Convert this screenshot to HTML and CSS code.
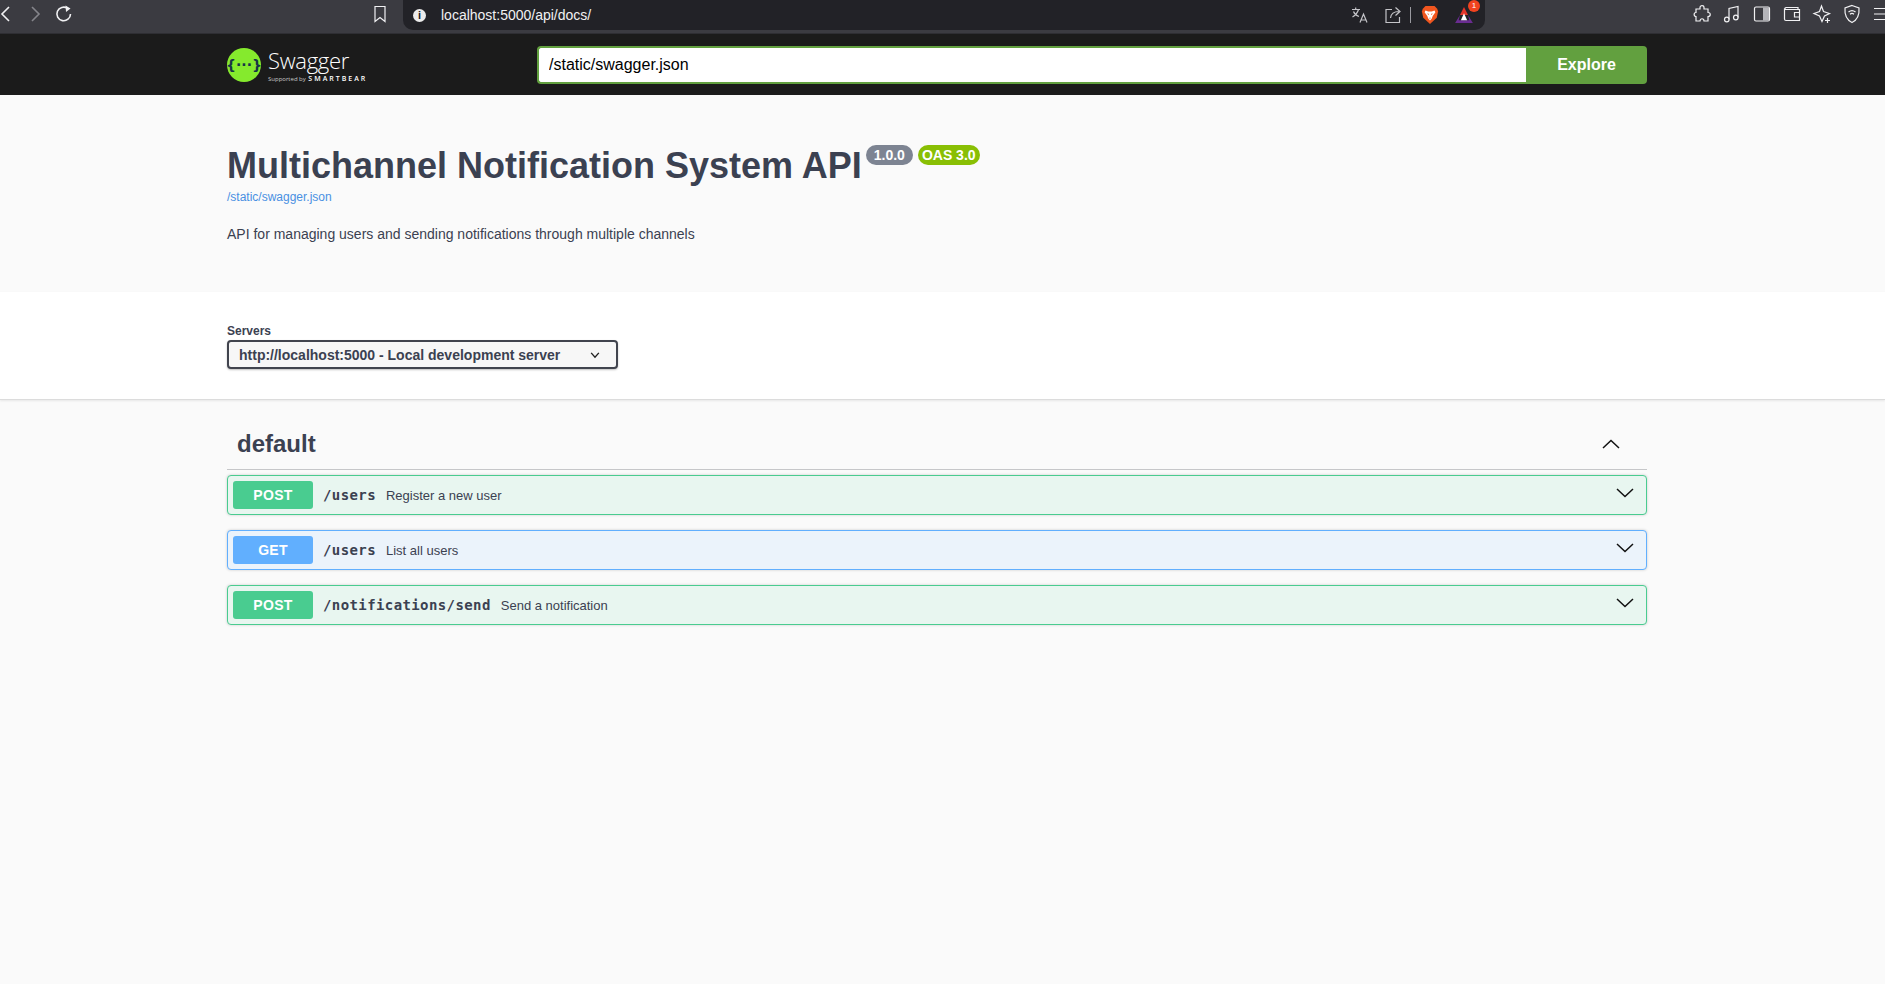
FILE: index.html
```html
<!DOCTYPE html>
<html lang="en">
<head>
    <meta charset="UTF-8">
    <title>Swagger UI</title>
    <link rel="stylesheet" href="styles.css">
</head>
<body>
<!-- browser toolbar -->
<div class="browser">
    <div class="nav">
        <svg class="tool back" viewBox="0 0 20 20"><path d="M13 3 L6 10 L13 17"/></svg>
        <svg class="tool forward" viewBox="0 0 20 20"><path d="M7 3 L14 10 L7 17"/></svg>
        <svg class="tool reload" viewBox="0 0 20 20"><path d="M16.5 10 A6.8 6.8 0 1 1 13.5 4.3"/><path class="filled" d="M11.5 1.5 L16.5 4.5 L12 8 Z"/></svg>
    </div>
    <svg class="tool bookmark" viewBox="0 0 20 20"><path class="thin" d="M5 2.500 H15 V17.500 L10 13.500 L5 17.500 Z"/></svg>
    <div class="urlbar">
        <span class="info-dot">i</span>
        <span class="url">localhost:5000/api/docs/</span>
        <svg class="tool translate" viewBox="0 0 20 20"><path class="thin dim" d="M2 4.500 H10 M5.700 2.500 V4.500 M8.500 4.500 C7.500 8 5 10.500 2.500 12 M3.500 6.500 C4.500 9 6.500 10.800 9 11.500 M10 17.500 L13.500 9 L17 17.500 M11.200 15 H15.800"/></svg>
        <svg class="tool share" viewBox="0 0 20 20"><path class="thin dim" d="M9 4.500 H3 V17.500 H16.500 V12 M7.500 13 C8 8.500 11 6.500 16 6.500 M12.500 2.500 L17 6.500 L12.500 10.500"/></svg>
        <span class="divider"></span>
        <svg class="brave" viewBox="0 0 20 22"><path fill="#f1561f" d="M5 1 H15 L18 4 L19 7 L17.500 14 L10 21 L2.500 14 L1 7 L2 4 Z"/><path fill="#fff" d="M5 6 L8 7 H12 L15 6 L16 8 L13 12 L12 15 L10 17 L8 15 L7 12 L4 8 Z"/><path fill="#f1561f" d="M7 9 L9 10 L8 11 Z M13 9 L11 10 L12 11 Z M9 14 H11 L10 15.500 Z"/></svg>
        <div class="rewards">
            <svg viewBox="0 0 20 18"><path fill="#e5352a" d="M10 0 L14.500 9 H5.500 Z"/><path fill="#6a2c91" d="M5.500 9 L0 18 H20 L14.500 9 L16 15 H4 Z"/><path fill="#fff" d="M10 7 L13.500 15 H6.500 Z"/></svg>
            <span class="badge">1</span>
        </div>
    </div>
    <div class="extensions">
        <svg class="tool" viewBox="0 0 20 20"><path class="thin" d="M8 3.500 C8 1 12 1 12 3.500 V5 H16 V8.500 C19 8.500 19 12.500 16 12.500 V17 H12 C12 14 8 14 8 17 H4 V12.500 C1.500 12.500 1.500 8.500 4 8.500 V5 H8 Z"/></svg>
        <svg class="tool" viewBox="0 0 20 20"><path class="thin" d="M7 15.500 V4.500 L16 2.500 V13.500"/><circle class="thin" cx="4.800" cy="15.500" r="2.300"/><circle class="thin" cx="13.800" cy="13.500" r="2.300"/></svg>
        <svg class="tool" viewBox="0 0 20 20"><rect class="thin" x="2.500" y="3" width="15" height="14" rx="1.500"/><rect class="soft" x="11" y="3.500" width="6" height="13"/></svg>
        <svg class="tool" viewBox="0 0 20 20"><path class="thin" d="M16 5.500 V3.500 H4 C2.500 3.500 2.500 5.500 4 5.500 H17.500 V16.500 H4 C3 16.500 2.500 16 2.500 15 V4.500 M17.500 8.500 H12.500 V13 H17.500"/></svg>
        <svg class="tool" viewBox="0 0 20 20"><path class="thin" d="M9.500 2 L11.500 7.500 L17.500 9.500 L12.500 12 L10 17.500 L7.500 12 L2 9.500 L7.500 7.500 Z M15.500 14 V19 M13 16.500 H18"/></svg>
        <svg class="tool" viewBox="0 0 20 20"><path class="thin" d="M10 1.500 L17 4 C17.500 10 16 15.500 10 18.500 C4 15.500 2.500 10 3 4 Z M6.500 8 C8.500 6.300 11.500 6.300 13.500 8 M8 10.300 C9.200 9.300 10.800 9.300 12 10.300 M10 12.500 V12.600"/></svg>
        <svg class="tool" viewBox="0 0 20 20"><path class="thin" d="M2 4.500 H18 M2 10 H18 M2 15.500 H18"/></svg>
    </div>
</div>

<!-- swagger top bar -->
<div class="topbar">
    <div class="wrapper topbar-row">
        <div class="logo">
            <svg class="logo-mark" viewBox="0 0 34 34"><circle cx="17" cy="17" r="17" fill="#85ea2d"/><text x="17" y="22" text-anchor="middle" class="logo-braces">{···}</text></svg>
            <div class="logo-text">
                <span class="logo-name">Swagger</span>
                <span class="logo-sub">Supported by <b>SMARTBEAR</b></span>
            </div>
        </div>
        <div class="download-url">
            <input class="url-input" type="text" value="/static/swagger.json">
            <button class="explore">Explore</button>
        </div>
    </div>
</div>

<div class="info">
    <div class="wrapper">
        <div class="title-row">
            <h1 class="title">Multichannel Notification System API</h1>
            <span class="version">1.0.0</span>
            <span class="oas">OAS 3.0</span>
        </div>
        <a class="spec-link" href="#">/static/swagger.json</a>
        <p class="description">API for managing users and sending notifications through multiple channels</p>
    </div>
</div>

<div class="scheme">
    <div class="wrapper">
        <span class="servers-label">Servers</span>
        <div class="server-select">
            <span>http://localhost:5000 - Local development server</span>
            <svg class="select-arrow" viewBox="0 0 20 20"><path d="M4.500 7 L10 13 L15.500 7"/></svg>
        </div>
    </div>
</div>

<div class="wrapper">
    <div class="tag">
        <h3>default</h3>
        <svg class="chevron" viewBox="0 0 18 10"><path d="M1 9 L9 1.500 L17 9"/></svg>
    </div>
    <div class="op post">
        <span class="method">POST</span>
        <span class="path">/users</span>
        <span class="summary">Register a new user</span>
        <svg class="chevron" viewBox="0 0 18 10"><path d="M1 1 L9 8.500 L17 1"/></svg>
    </div>
    <div class="op get">
        <span class="method">GET</span>
        <span class="path">/users</span>
        <span class="summary">List all users</span>
        <svg class="chevron" viewBox="0 0 18 10"><path d="M1 1 L9 8.500 L17 1"/></svg>
    </div>
    <div class="op post">
        <span class="method">POST</span>
        <span class="path">/notifications/send</span>
        <span class="summary">Send a notification</span>
        <svg class="chevron" viewBox="0 0 18 10"><path d="M1 1 L9 8.500 L17 1"/></svg>
    </div>
</div>
</body>
</html>
```

FILE: styles.css
```css
* {
    box-sizing: border-box;
}
html, body {
    margin: 0;
    height: 100%;
}
body {
    background-color: #fafafa;
    font-family: "Liberation Sans", Arial, sans-serif;
    color: #3b4151;
    overflow: hidden;
}
.wrapper {
    width: 1420px;
    margin-left: 227px;
}

/* browser toolbar */
.browser {
    display: flex;
    height: 34px;
    background-color: #3b3b41;
    border-bottom: 1px solid #2e2e33;
}
.tool {
    width: 20px;
    height: 20px;
    flex: none;
}
.tool path, .tool circle, .tool rect {
    fill: none;
    stroke: #f1f1f3;
    stroke-width: 1.6;
}
.tool .thin {
    stroke-width: 1.2;
}
.tool .dim {
    stroke: #c4c4c8;
}
.tool .filled {
    fill: #f1f1f3;
    stroke: none;
}
.tool .soft {
    fill: #b5b5ba;
    stroke: none;
}
.nav {
    display: flex;
    flex: none;
    align-items: center;
    gap: 9px;
    margin-left: -4px;
    height: 28px;
}
.nav .forward path {
    stroke: #85858b;
}
.bookmark {
    margin: 4px 13px 0 296px;
}
.urlbar {
    display: flex;
    flex: none;
    align-items: center;
    width: 1082px;
    height: 30px;
    padding-left: 10px;
    background-color: #222227;
    border-radius: 0 0 10px 10px;
}
.info-dot {
    width: 13px;
    height: 13px;
    border-radius: 50%;
    background-color: #ececec;
    color: #222227;
    font-size: 11px;
    font-weight: bold;
    line-height: 13px;
    text-align: center;
}
.url {
    margin-left: 15px;
    color: #f1f1f3;
    font-size: 14px;
}
.translate {
    margin-left: auto;
}
.share {
    margin-left: 13px;
}
.divider {
    width: 1px;
    height: 16px;
    margin: 0 10px 0 7px;
    background-color: #9a9aa0;
}
.brave {
    width: 18px;
    height: 20px;
}
.rewards {
    position: relative;
    width: 18px;
    height: 16px;
    margin: 0 12px 0 16px;
}
.rewards svg {
    display: block;
    width: 18px;
    height: 16px;
}
.rewards .badge {
    position: absolute;
    top: -7px;
    right: -7px;
    width: 12px;
    height: 12px;
    border-radius: 50%;
    background-color: #f1431f;
    color: #fff;
    font-size: 8px;
    line-height: 12px;
    text-align: center;
}
.extensions {
    display: flex;
    flex: none;
    gap: 10px;
    height: 28px;
    align-items: center;
    margin-left: 207px;
}

/* swagger top bar */
.topbar {
    height: 61px;
    background-color: #1b1b1b;
}
.topbar-row {
    display: flex;
    align-items: center;
    height: 61px;
}
.logo {
    display: flex;
    align-items: center;
    gap: 7px;
    width: 310px;
}
.logo-mark {
    width: 34px;
    height: 34px;
}
.logo-braces {
    fill: #173647;
    font-family: "DejaVu Sans", sans-serif;
    font-size: 14px;
    font-weight: bold;
}
.logo-text {
    display: flex;
    flex-direction: column;
    padding-top: 2px;
    color: #fff;
}
.logo-name {
    font-family: "Open Sans", sans-serif;
    font-size: 22px;
    font-weight: 300;
    line-height: 27px;
    letter-spacing: -0.300px;
}
.logo-sub {
    font-family: "Open Sans", sans-serif;
    font-size: 6px;
    line-height: 9px;
    color: #c9c9c9;
    white-space: nowrap;
}
.logo-sub b {
    margin-left: 1px;
    font-size: 7px;
    font-weight: 600;
    letter-spacing: 2px;
    color: #fff;
}
.download-url {
    display: flex;
    flex: 1;
    height: 38px;
}
.url-input {
    flex: 1;
    min-width: 0;
    height: 38px;
    padding: 0 10px;
    border: 2px solid #62a03f;
    border-right: none;
    border-radius: 4px 0 0 4px;
    background-color: #fff;
    color: #000;
    font-family: inherit;
    font-size: 16px;
    outline: none;
}
.explore {
    width: 121px;
    height: 38px;
    border: none;
    border-radius: 0 4px 4px 0;
    background-color: #62a03f;
    color: #fff;
    font-family: inherit;
    font-size: 16px;
    font-weight: bold;
}

/* info */
.info {
    height: 197px;
    padding-top: 50px;
}
.title-row {
    display: flex;
    align-items: flex-start;
}
.title {
    margin: 0;
    font-size: 36px;
    line-height: 42px;
    font-weight: bold;
}
.version, .oas {
    height: 20px;
    margin-left: 4px;
    padding: 0 8px;
    border-radius: 57px;
    color: #fff;
    font-size: 14px;
    font-weight: bold;
    line-height: 20px;
}
.oas {
    margin-left: 5px;
    padding: 0 4px;
    background-color: #89bf04;
}
.version {
    background-color: #7d8492;
}
.spec-link {
    display: block;
    margin-top: 3px;
    color: #4990e2;
    font-size: 12px;
    line-height: 14px;
    text-decoration: none;
}
.description {
    margin: 22px 0 0;
    font-size: 14px;
    line-height: 16px;
}

/* servers */
.scheme {
    height: 108px;
    padding-top: 32px;
    background-color: #fff;
    border-bottom: 1px solid #dcdcdc;
    box-shadow: 0 1px 2px rgba(0,0,0,0.08);
}
.servers-label {
    display: block;
    font-size: 12px;
    font-weight: bold;
    line-height: 14px;
}
.server-select {
    display: flex;
    align-items: center;
    justify-content: space-between;
    width: 391px;
    height: 29px;
    margin-top: 2px;
    padding: 0 14px 0 10px;
    border: 2px solid #41444e;
    border-radius: 4px;
    background-color: #f7f7f7;
    box-shadow: 0 1px 2px rgba(0,0,0,0.25);
    font-size: 14px;
    font-weight: bold;
}
.select-arrow {
    width: 14px;
    height: 14px;
}
.select-arrow path {
    fill: none;
    stroke: #222;
    stroke-width: 2;
}

/* operations */
.tag {
    display: flex;
    align-items: center;
    justify-content: space-between;
    height: 70px;
    padding: 18px 27px 0 10px;
    border-bottom: 1px solid #c6c7c9;
}
.tag h3 {
    margin: 0;
    font-size: 24px;
    font-weight: bold;
}
.chevron {
    width: 18px;
    height: 10px;
    flex: none;
}
.chevron path {
    fill: none;
    stroke: #111;
    stroke-width: 1.500;
}
.op {
    display: flex;
    align-items: center;
    height: 40px;
    margin: 5px 0 15px;
    padding: 0 12px 0 5px;
    border: 1px solid;
    border-radius: 4px;
    box-shadow: 0 0 3px rgba(0,0,0,0.19);
}
.op .chevron {
    margin-top: -4px;
}
.op.post {
    border-color: #49cc90;
    background-color: #e8f6f0;
}
.op.get {
    border-color: #61affe;
    background-color: #ebf3fb;
}
.method {
    width: 80px;
    height: 28px;
    border-radius: 3px;
    color: #fff;
    font-size: 14px;
    font-weight: bold;
    letter-spacing: 0.300px;
    line-height: 28px;
    text-align: center;
}
.post .method {
    background-color: #49cc90;
}
.get .method {
    background-color: #61affe;
}
.path {
    margin-left: 10px;
    font-family: "DejaVu Sans Mono", monospace;
    font-size: 14px;
    font-weight: bold;
    letter-spacing: 0.400px;
}
.summary {
    flex: 1;
    margin-left: 10px;
    font-size: 13px;
}
```
